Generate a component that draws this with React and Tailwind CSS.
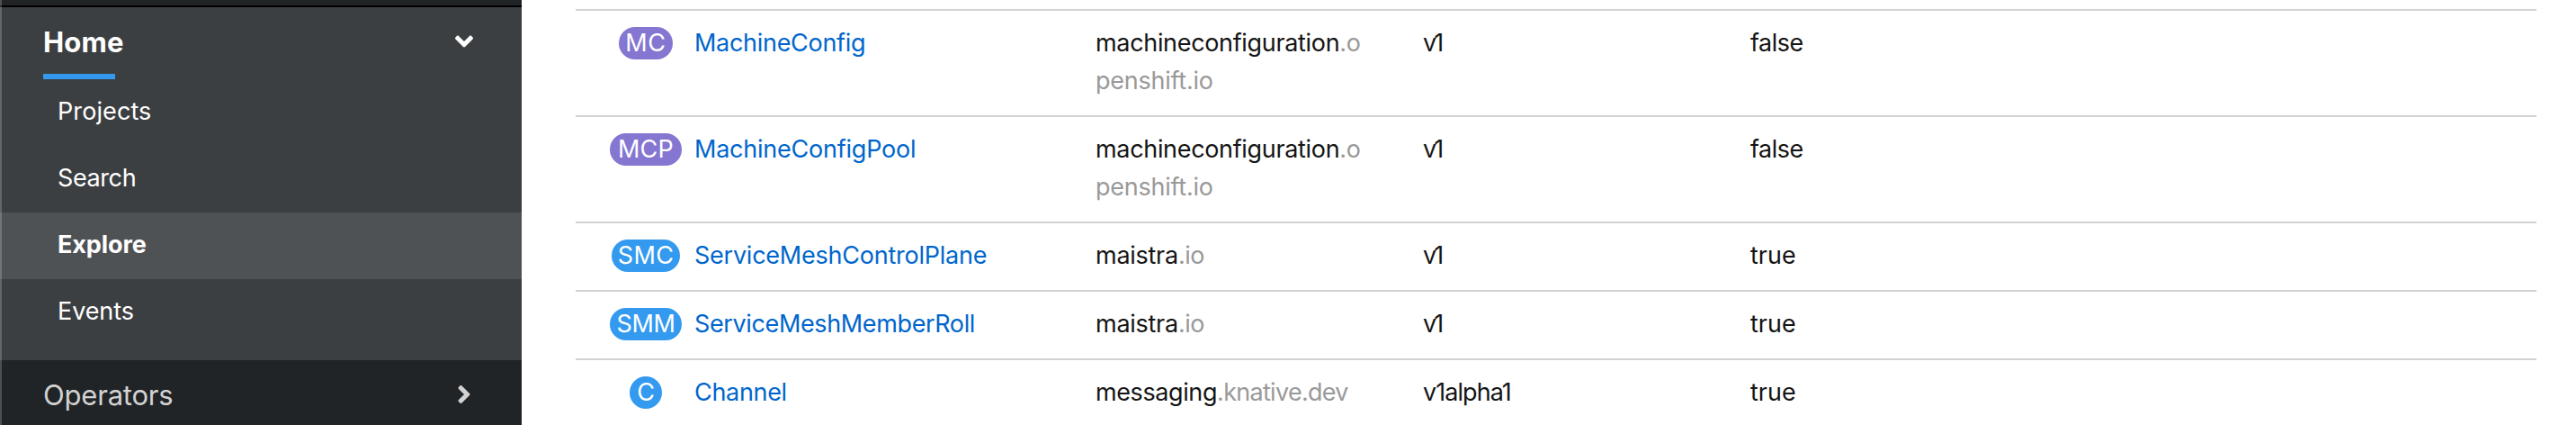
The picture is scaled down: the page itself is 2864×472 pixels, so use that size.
import React from "react";
import { FaAngleDown, FaAngleRight } from "react-icons/fa";

const links = [
  { label: "Projects", text: "tracking-[0.1px]" },
  { label: "Search", text: "tracking-[-0.4px]" },
  { label: "Explore", text: "tracking-[-0.1px] font-bold", active: true },
  { label: "Events", text: "tracking-[-0.1px]" },
];

const rows = [
  { badge: "MC", badgeClass: "w-[60px] bg-[#8476d1] tracking-[0.6px]", kind: "MachineConfig", kindClass: "tracking-[-0.3px]", group: "machineconfiguration", domain: ".openshift.io", groupClass: "tracking-[-0.33px]", domainClass: "tracking-[-0.25px]", version: "v1", versionClass: "tracking-[-2.8px]", namespaced: "false" },
  { badge: "MCP", badgeClass: "w-[80px] bg-[#8476d1] tracking-[0.2px]", kind: "MachineConfigPool", kindClass: "tracking-[-0.23px]", group: "machineconfiguration", domain: ".openshift.io", groupClass: "tracking-[-0.33px]", domainClass: "tracking-[-0.25px]", version: "v1", versionClass: "tracking-[-2.8px]", namespaced: "false" },
  { badge: "SMC", badgeClass: "w-[76px] bg-[#339af0] tracking-[0.4px]", kind: "ServiceMeshControlPlane", kindClass: "tracking-[-0.24px]", group: "maistra", domain: ".io", groupClass: "tracking-[-0.27px]", domainClass: "tracking-[-0.5px]", version: "v1", versionClass: "tracking-[-2.8px]", namespaced: "true" },
  { badge: "SMM", badgeClass: "w-[80px] bg-[#339af0] tracking-[-0.4px]", kind: "ServiceMeshMemberRoll", kindClass: "tracking-[-0.37px]", group: "maistra", domain: ".io", groupClass: "tracking-[-0.27px]", domainClass: "tracking-[-0.5px]", version: "v1", versionClass: "tracking-[-2.8px]", namespaced: "true" },
  { badge: "C", badgeClass: "w-[36px] bg-[#339af0]", kind: "Channel", kindClass: "tracking-[-0.32px]", group: "messaging", domain: ".knative.dev", groupClass: "tracking-[-0.4px]", domainClass: "tracking-[-0.7px]", version: "v1alpha1", versionClass: "tracking-[-0.94px]", namespaced: "true" },
];

function Sidebar() {
  return (
    <nav className="relative w-[580px] shrink-0 bg-[#212427] text-white">
      <div className="h-2 border-b-2 border-black" />
      <section className="h-[392px] bg-[#3c3f42]">
        <div className="flex h-20 items-start justify-between pl-12 pr-[48px] pt-[18px]">
          <div>
            <div className="text-[31px] font-bold leading-[42px] tracking-[0.2px]">Home</div>
            <div className="mt-[14px] h-[6px] w-20 bg-[#339af0]" />
          </div>
          <FaAngleDown className="mt-1 h-8 w-8" />
        </div>
        <ul>
          {links.map((l) => (
            <li key={l.label} className={`h-[74px] pl-16 pt-[15px] leading-[42px] ${l.text} ${l.active ? "bg-[#4f5255]" : ""}`}>
              {l.label}
            </li>
          ))}
        </ul>
      </section>
      <div className="flex items-start justify-between pl-12 pr-[48px] pt-[18px] text-[#d2d2d2]">
        <div className="text-[31px] leading-[42px] tracking-[-0.2px]">Operators</div>
        <FaAngleRight className="mt-1 h-8 w-8" />
      </div>
      <div className="absolute inset-y-0 left-0 w-[2px] bg-white/20" />
    </nav>
  );
}

function Row({ row }) {
  return (
    <div className="flex border-t-2 border-[#d2d2d2] pt-[15px] pb-[17px] leading-[42px]">
      <div className="flex w-[578px] pl-[36px]">
        <div className="flex w-[84px] justify-center pt-[3px]">
          <span className={`flex h-9 items-center justify-center rounded-full leading-9 text-white ${row.badgeClass}`}>{row.badge}</span>
        </div>
        <a className={`ml-3 text-[#06c] ${row.kindClass}`}>{row.kind}</a>
      </div>
      <div className="w-[364px] shrink-0 pr-[64px] break-all">
        <span className={row.groupClass}>{row.group}</span>
        <span className={`text-[#999] ${row.domainClass}`}>{row.domain}</span>
      </div>
      <div className={`w-[364px] ${row.versionClass}`}>{row.version}</div>
      <div className={row.namespaced === "false" ? "tracking-[-0.5px]" : ""}>{row.namespaced}</div>
    </div>
  );
}

export default function App() {
  return (
    <div className="flex h-[472px] w-[2864px] overflow-hidden bg-white text-[27px] text-[#151515] [font-family:Inter,sans-serif]">
      <Sidebar />
      <main className="grow pl-[60px] pr-[44px] pt-[10px]">
        {rows.map((r) => (
          <Row key={r.kind} row={r} />
        ))}
      </main>
    </div>
  );
}
